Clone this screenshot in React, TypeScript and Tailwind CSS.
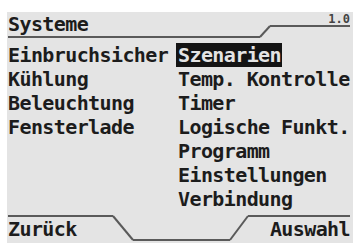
import React from 'react';

const LINE = '#5a5a5a';

function Lcd({ children }: { children: React.ReactNode }) {
  return <span className="inline-block whitespace-pre tracking-[-0.6px]">{children}</span>;
}

const leftItems = ['Einbruchsicher', 'Kühlung', 'Beleuchtung', 'Fensterlade'];
const rightItems = ['Temp. Kontrolle', 'Timer', 'Logische Funkt.', 'Programm', 'Einstellungen', 'Verbindung'];

export default function App() {
  return (
    <div className="h-[246px] w-[356px] bg-white pl-[7px] pt-3">
      <div className="flex h-[231px] w-[346px] flex-col bg-[#e4e4e4] pl-px pr-[3px] font-['DejaVu_Sans_Mono','Liberation_Mono',monospace] text-[20px] font-bold text-[#1c1c1c]">
        <header className="flex h-[26px] items-start">
          <div className="h-[26px] w-[252px] shrink-0 border-b-2 border-[#5a5a5a] leading-6">
            <Lcd>Systeme</Lcd>
          </div>
          <svg width="10" height="26" className="shrink-0 overflow-visible">
            <line x1="0" y1="25" x2="10" y2="14" stroke={LINE} strokeWidth="2" />
          </svg>
          <div className="flex h-[15px] flex-1 items-end justify-end border-b-2 border-[#5a5a5a] text-[12px] leading-[12px] text-[#444]">
            1.0
          </div>
        </header>

        <div className="mt-[5px] flex">
          <div className="w-[168px] shrink-0">
            {leftItems.map((t) => (
              <div key={t} className="h-6 leading-6">
                <Lcd>{t}</Lcd>
              </div>
            ))}
          </div>
          <div className="flex-1">
            <div className="h-6 leading-6">
              <span className="inline-block h-6 bg-[#141414] pl-[2px] pr-px text-[#e4e4e4]">
                <Lcd>Szenarien</Lcd>
              </span>
            </div>
            {rightItems.map((t) => (
              <div key={t} className="h-6 pl-[2px] leading-6">
                <Lcd>{t}</Lcd>
              </div>
            ))}
          </div>
        </div>

        <footer className="mt-1 flex h-[26px]">
          <div className="w-[105px] shrink-0 border-t-2 border-[#5a5a5a] leading-6">
            <Lcd>Zurück</Lcd>
          </div>
          <svg width="20" height="26" className="shrink-0 overflow-visible">
            <line x1="0" y1="1" x2="20" y2="25" stroke={LINE} strokeWidth="2" />
          </svg>
          <div className="h-[26px] w-[97px] shrink-0 border-b-2 border-[#5a5a5a]" />
          <svg width="18" height="26" className="shrink-0 overflow-visible">
            <line x1="0" y1="25" x2="18" y2="1" stroke={LINE} strokeWidth="2" />
          </svg>
          <div className="flex-1 border-t-2 border-[#5a5a5a] text-right leading-6">
            <Lcd>Auswahl</Lcd>
          </div>
        </footer>
      </div>
    </div>
  );
}
